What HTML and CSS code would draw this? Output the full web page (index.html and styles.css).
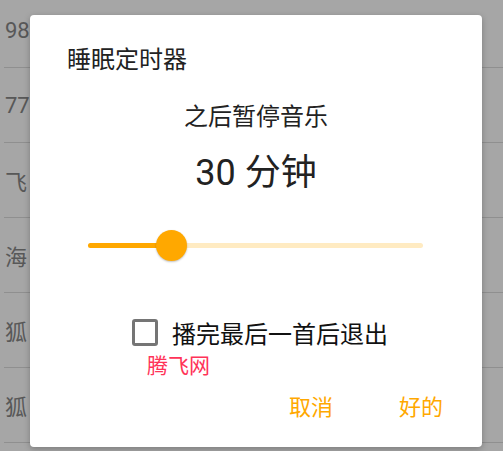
FILE: index.html
```html
<!DOCTYPE html>
<html lang="zh">
<head>
    <meta charset="UTF-8">
    <meta name="viewport" content="width=device-width, initial-scale=1.0">
    <title>睡眠定时器</title>
    <link rel="stylesheet" href="styles.css">
</head>
<body>

    <!-- Lista de fondo -->
    <div class="lista">
        <div class="fila">98</div>
        <div class="fila">77</div>
        <div class="fila">飞</div>
        <div class="fila">海</div>
        <div class="fila">狐</div>
        <div class="fila">狐</div>
    </div>

    <div class="scrim"></div>

    <!-- Dialogo -->
    <div class="dialogo">
        <div class="titulo">睡眠定时器</div>
        <div class="subtitulo">之后暂停音乐</div>
        <div class="minutos">30 分钟</div>

        <div class="slider">
            <div class="track">
                <div class="relleno" style="width: 25%"></div>
                <div class="thumb" style="left: 25%"></div>
            </div>
        </div>

        <label class="check-row">
            <span class="checkbox"></span>
            <span>播完最后一首后退出</span>
        </label>

        <div class="marca">腾飞网</div>

        <div class="botones">
            <span class="boton">取消</span>
            <span class="boton">好的</span>
        </div>
    </div>

</body>
</html>
```

FILE: styles.css
```css
body {
    margin: 0;
    width: 503px;
    height: 451px;
    overflow: hidden;
    background-color: #fff;
    font-family: Roboto, "Noto Sans CJK SC", sans-serif;
    position: relative;
}
.lista {
    margin-top: -7px;
}
.fila {
    height: 74px;
    margin-left: 4px;
    padding-left: 1px;
    border-bottom: 1px solid #dcdcdc;
    display: flex;
    align-items: center;
    font-size: 22px;
    color: #888;
}
.scrim {
    position: absolute;
    inset: 0;
    background-color: rgba(0, 0, 0, 0.35);
}
.dialogo {
    position: absolute;
    left: 30px;
    top: 15px;
    width: 452px;
    height: 432px;
    background-color: #fff;
    border-radius: 4px;
    box-shadow: 0 2px 6px rgba(0, 0, 0, 0.25);
    display: flex;
    flex-direction: column;
}
.titulo {
    margin-top: 33px;
    padding-left: 37px;
    font-size: 24px;
    line-height: 24px;
    color: #222;
}
.subtitulo {
    margin-top: 33px;
    text-align: center;
    font-size: 24px;
    line-height: 24px;
    color: #222;
}
.minutos {
    margin-top: 24px;
    text-align: center;
    font-size: 36px;
    line-height: 40px;
    color: #222;
}
.slider {
    margin: 36px 59px 0 58px;
    height: 32px;
    display: flex;
    align-items: center;
}
.track {
    position: relative;
    width: 100%;
    height: 5px;
    border-radius: 3px;
    background-color: #ffebc2;
}
.relleno {
    height: 100%;
    border-radius: 3px;
    background-color: #ffa800;
}
.thumb {
    position: absolute;
    top: 50%;
    width: 31px;
    height: 31px;
    margin: -15.5px 0 0 -15.5px;
    border-radius: 50%;
    background-color: #ffa800;
    box-shadow: 0 1px 2px rgba(0, 0, 0, 0.25);
}
.check-row {
    margin-top: 57px;
    padding-left: 8px;
    display: flex;
    justify-content: center;
    align-items: center;
    gap: 14px;
    height: 28px;
    font-size: 24px;
    color: #111;
}
.checkbox {
    width: 20px;
    height: 21px;
    border: 3px solid #757575;
    border-radius: 3px;
}
.marca {
    margin-top: 9px;
    padding-left: 117px;
    font-size: 21px;
    line-height: 22px;
    color: #ff3358;
}
.botones {
    margin-top: 19px;
    padding-right: 39px;
    display: flex;
    justify-content: flex-end;
    gap: 66px;
}
.boton {
    font-size: 22px;
    line-height: 24px;
    color: #ffa800;
}
```
